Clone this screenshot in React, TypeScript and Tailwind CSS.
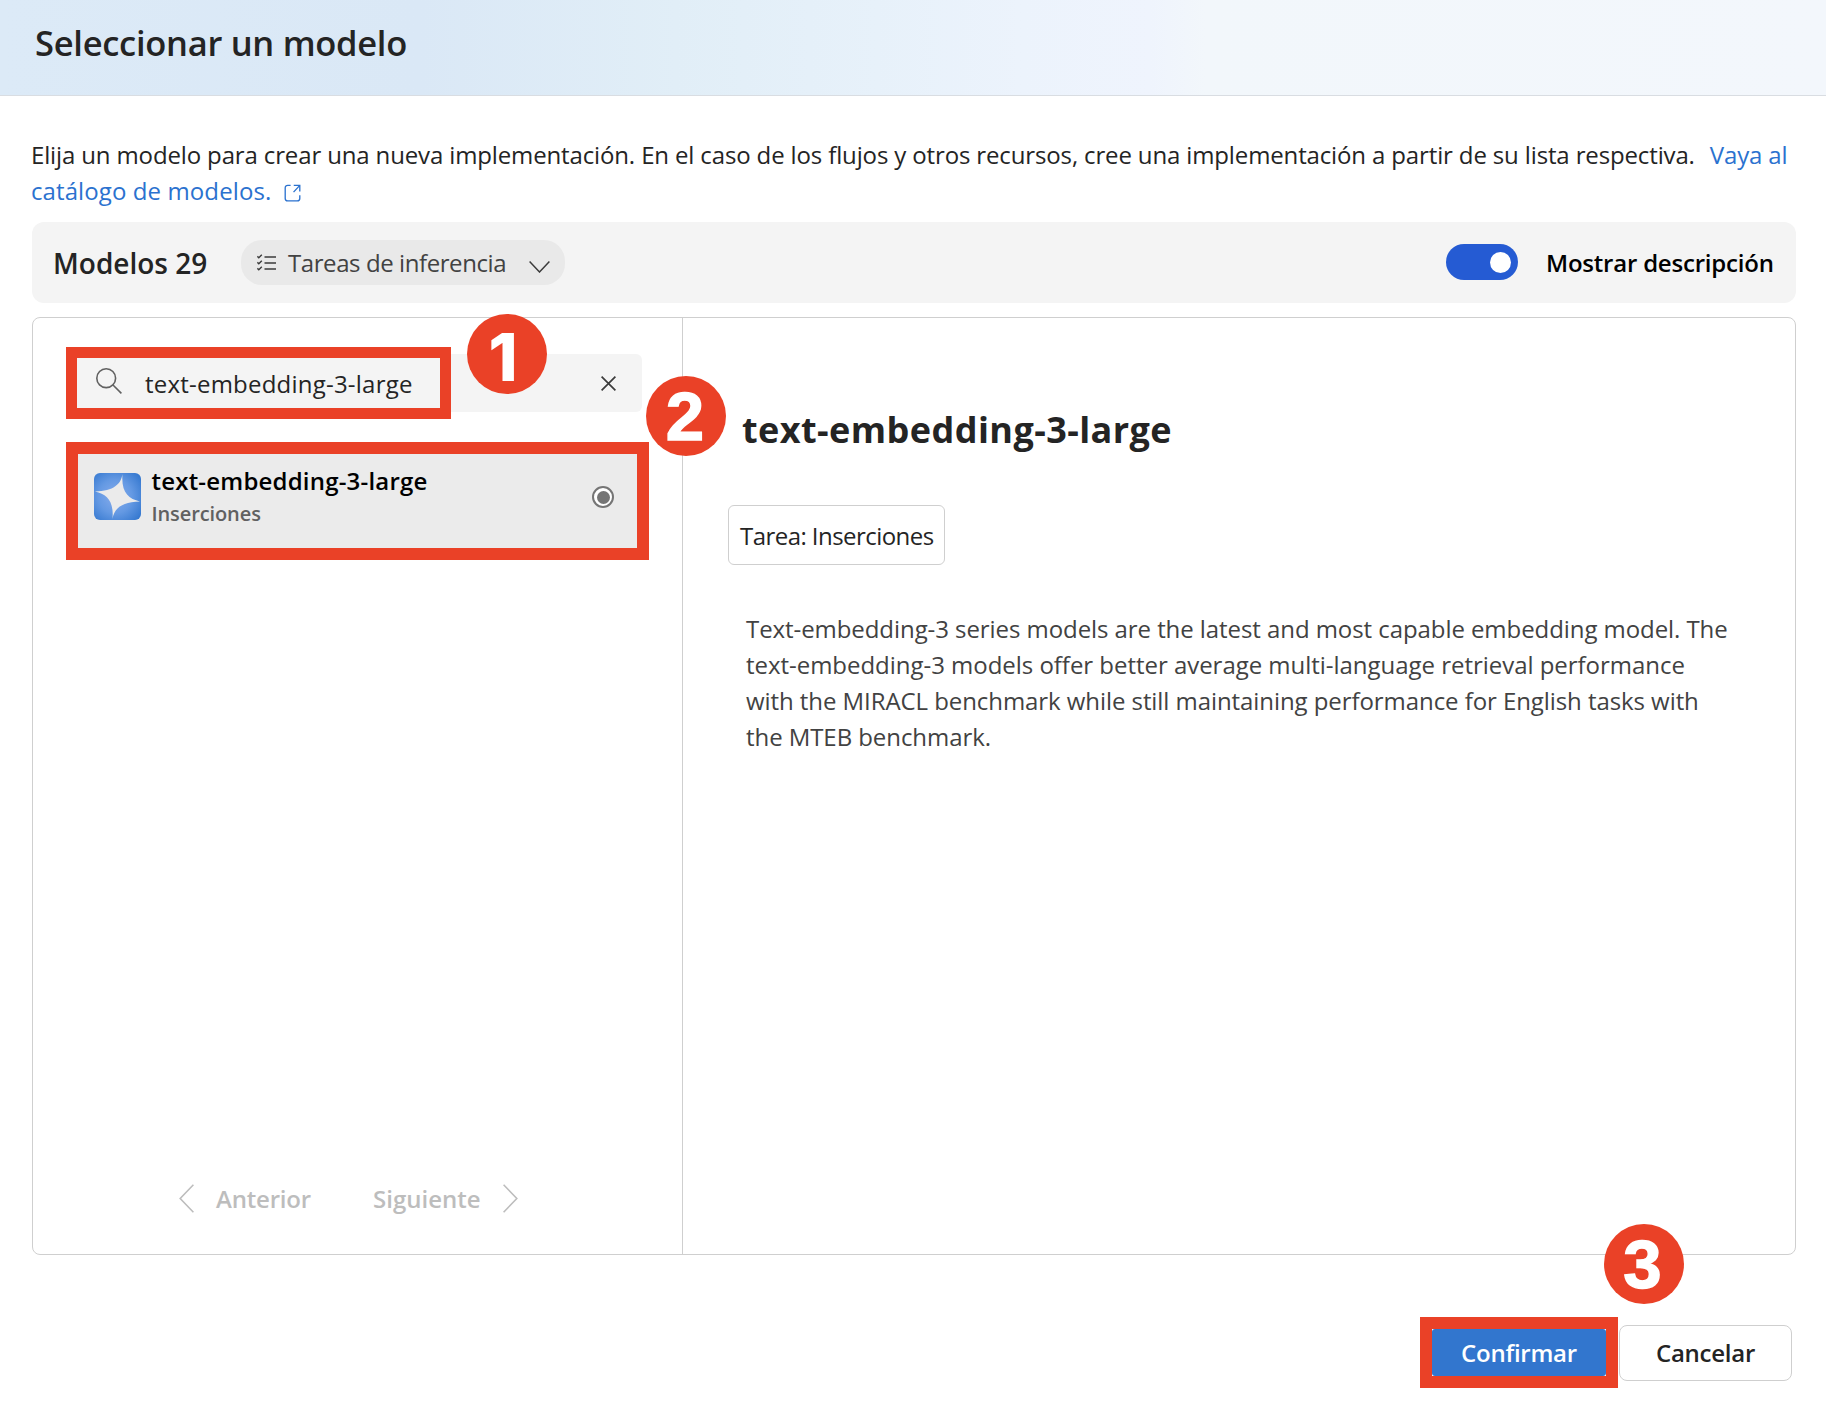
import type { ReactNode } from "react";

function StepBadge({ children, className }: { children: ReactNode; className: string }) {
  return (
    <div
      className={`absolute z-20 flex size-20 items-center justify-center rounded-full bg-[#ea4127] font-bold text-white ${className}`}
    >
      {children}
    </div>
  );
}

function ExternalLinkIcon() {
  return (
    <svg className="ml-[13px] inline-block align-[-2px]" width="17" height="18" viewBox="0 0 17 19" fill="none" stroke="#2b72cf" strokeWidth="1.4">
      <path d="M6.5 1.4H3.4a2.6 2.6 0 0 0-2.6 2.6v11.2a2.6 2.6 0 0 0 2.6 2.6h10.2a2.6 2.6 0 0 0 2.6-2.6v-3.4" />
      <path d="M9.8 1.4h6.4v6.6M16.2 1.4 9.6 8.6" />
    </svg>
  );
}

function TaskListIcon() {
  return (
    <svg width="19" height="17" viewBox="0 0 19 17" fill="none" stroke="#3b3b3b" strokeWidth="1.4">
      <path d="M.4 2.3 1.8 3.7 4.8.7M.4 8.3l1.4 1.4 3-3M.4 14.3l1.4 1.4 3-3" />
      <path d="M7.5 3H19M7.5 9H19M7.5 15H19" />
    </svg>
  );
}

function ModelIcon() {
  return (
    <svg width="47" height="47" viewBox="0 0 47 47">
      <defs>
        <radialGradient id="modelFill" cx="0.45" cy="0.5" r="0.72">
          <stop offset="0" stopColor="#86acec" />
          <stop offset="0.5" stopColor="#6499e3" />
          <stop offset="1" stopColor="#2f74cd" />
        </radialGradient>
      </defs>
      <rect width="47" height="47" rx="6" fill="url(#modelFill)" />
      <path
        fill="#ebebeb"
        d="M28.5 1C27 11 20 18 1 18.5 13 21 20 28 18.5 46 20 36 27 29 46 28.5 34 26 27 19 28.5 1Z"
      />
    </svg>
  );
}

export default function App() {
  return (
    <div className="flex h-[1402px] w-[1826px] flex-col overflow-hidden bg-white font-['Open_Sans','Noto_Sans',sans-serif] text-[24px] leading-[36px] text-[#242424]">
      <header className="h-24 border-b border-[#d9dde2] bg-[linear-gradient(90deg,#dceaf7_0%,#dae8f6_23%,#e1eef7_37%,#e7f1fa_48%,#ecf3fc_56%,#eff4fd_63%,#f2f7fb_66%,#f3f7fc_100%)] pt-[23px] pl-[35px]">
        <h1 className="text-[34.5px] leading-[40px] font-semibold tracking-[-0.28px]">Seleccionar un modelo</h1>
      </header>

      <main className="flex flex-col pt-10 pr-[30px] pl-8">
        <p className="-ml-px translate-y-px whitespace-nowrap">
          <span className="tracking-[-0.137px]">
            Elija un modelo para crear una nueva implementación. En el caso de los flujos y otros recursos, cree una
            implementación a partir de su lista respectiva.
          </span>
          <a className="ml-[15px] tracking-[-0.13px] text-[#2b72cf]">Vaya al</a>
          <br />
          <a className="tracking-[0.1px] text-[#2b72cf]">
            catálogo de modelos.
            <ExternalLinkIcon />
          </a>
        </p>

        <section className="mt-[14px] flex h-[81px] items-center rounded-[12px] bg-[#f4f4f4] pr-5 pl-[21px]">
          <h2 className="w-[188px] pt-px text-[28px] font-semibold">Modelos 29</h2>
          <button className="flex h-[45px] w-[324px] items-center rounded-[21px] bg-[#e9e9e9] pr-[15px] pl-4 text-[#424242]">
            <TaskListIcon />
            <span className="ml-3 tracking-[-0.42px]">Tareas de inferencia</span>
            <svg className="mt-[9px] ml-auto" width="21" height="12" viewBox="0 0 21 12" fill="none" stroke="#3b3b3b" strokeWidth="1.5">
              <path d="M.6.6 10.5 11 20.4.6" />
            </svg>
          </button>
          <div className="mb-px ml-auto flex h-9 w-[72px] items-center justify-end rounded-full bg-[#255bd3] pr-[7px]">
            <div className="mt-px size-[21px] rounded-full bg-white" />
          </div>
          <span className="ml-7 w-[230px] font-semibold tracking-[-0.21px] whitespace-nowrap text-black">
            Mostrar descripción
          </span>
        </section>

        <section className="relative mt-[14px] flex h-[938px] rounded-lg border border-[#cfcfcf]">
          <div className="flex w-[650px] flex-col border-r border-[#cfcfcf] pt-9">
            <div className="relative ml-[34px] flex h-[58px] w-[575px] items-center rounded-md bg-[#f4f4f4] pr-[26px] pl-[29px]">
              <svg className="-mt-1" width="26" height="26" viewBox="0 0 26 26" fill="none" stroke="#616161" strokeWidth="1.6">
                <circle cx="10.2" cy="10.2" r="9.4" />
                <path d="m17 17 8.4 8.4" />
              </svg>
              <span className="mt-0.5 ml-[23px] tracking-[0.22px]">text-embedding-3-large</span>
              <svg className="ml-auto" width="15" height="15" viewBox="0 0 15 15" fill="none" stroke="#3b3b3b" strokeWidth="1.7">
                <path d="m.6.6 13.8 13.8M14.4.6.6 14.4" />
              </svg>
              <div className="absolute top-[-7px] left-[-1px] h-[72px] w-[385px] border-[11.5px] border-[#ea4127]" />
            </div>

            <div className="mt-[30px] ml-[33px] flex h-[118px] w-[583px] items-start border-[12px] border-[#ea4127] bg-[#ebebeb] pr-[23px] pl-4">
              <div className="mt-[19px]">
                <ModelIcon />
              </div>
              <div className="mt-[11px] ml-[10.5px]">
                <div className="leading-8 font-semibold tracking-[0.2px] text-black">text-embedding-3-large</div>
                <div className="mt-[3px] text-[20px] leading-7 font-semibold tracking-[-0.1px] text-[#616161]">
                  Inserciones
                </div>
              </div>
              <div className="mt-8 ml-auto flex size-[22px] items-center justify-center rounded-full border-2 border-[#757575] bg-white">
                <div className="size-[13px] rounded-full bg-[#757575]" />
              </div>
            </div>

            <div className="mt-auto mb-[37px] flex h-9 items-center pl-[146px] font-semibold text-[#bdbdbd]">
              <svg className="-mt-0.5" width="15" height="29" viewBox="0 0 15 29" fill="none" stroke="currentColor" strokeWidth="1.6">
                <path d="M14.4.8 1.2 14.5l13.2 13.7" />
              </svg>
              <span className="ml-[22px] w-[157px] tracking-[-0.2px]">Anterior</span>
              <span className="w-[130px]">Siguiente</span>
              <svg className="-mt-0.5" width="15" height="29" viewBox="0 0 15 29" fill="none" stroke="currentColor" strokeWidth="1.6">
                <path d="M.6.8l13.2 13.7L.6 28.2" />
              </svg>
            </div>
          </div>

          <div className="flex flex-1 flex-col items-start pt-[88px] pl-[45px]">
            <h3 className="ml-[14px] text-[36px] leading-[48px] font-bold tracking-[0.43px]">text-embedding-3-large</h3>
            <div className="mt-[51px] flex h-[60px] w-[217px] items-center rounded-md border border-[#cfcfcf] pt-px pl-[11px] tracking-[-0.55px] whitespace-nowrap">
              Tarea: Inserciones
            </div>
            <p className="mt-[46px] ml-[18px] tracking-[-0.07px] whitespace-nowrap text-[#424242]">
              Text-embedding-3 series models are the latest and most capable embedding model. The
              <br />
              <span className="tracking-[-0.03px]">
                text-embedding-3 models offer better average multi-language retrieval performance
              </span>
              <br />
              with the MIRACL benchmark while still maintaining performance for English tasks with
              <br />
              the MTEB benchmark.
            </p>
          </div>

          <StepBadge className="top-[-4px] left-[434px]">
            <span className="-ml-2 pt-[5px] font-['Inter',sans-serif] text-[66px] font-extrabold">1</span>
          </StepBadge>
          <StepBadge className="top-[58px] left-[613px]">
            <span className="-ml-0.5 pt-px font-['Liberation_Sans',sans-serif] text-[69px] [-webkit-text-stroke:1.4px_white]">
              2
            </span>
          </StepBadge>
        </section>

        <footer className="relative mt-[62px] flex items-center justify-end gap-px pr-1">
          <div className="h-[71px] w-[198px] border-[12px] border-[#ea4127] bg-white">
            <button className="flex h-[47px] w-[174px] items-center justify-center rounded-[3px] bg-[#3276ce] pt-px font-semibold tracking-[-0.25px] text-white">
              Confirmar
            </button>
          </div>
          <button className="flex h-14 w-[173px] items-center justify-center rounded-lg border border-[#cfcfcf] bg-white pt-px font-semibold tracking-[-0.25px]">
            Cancelar
          </button>
          <StepBadge className="top-[-93px] left-[1571.5px]">
            <span className="-ml-0.5 pt-px font-['Liberation_Sans',sans-serif] text-[69px] [-webkit-text-stroke:1.4px_white]">
              3
            </span>
          </StepBadge>
        </footer>
      </main>
    </div>
  );
}
